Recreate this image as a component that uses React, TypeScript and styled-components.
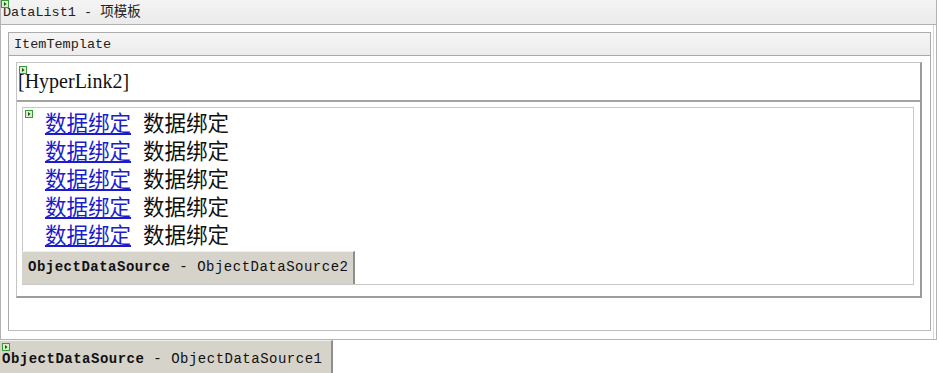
import styled, { createGlobalStyle } from "styled-components";

const GlobalStyle = createGlobalStyle`
  html, body {
    margin: 0;
    padding: 0;
    background: #ffffff;
  }
  body {
    width: 939px;
    height: 373px;
    overflow: hidden;
    font-family: "Liberation Mono", "Noto Sans CJK SC", monospace;
  }
`;

const rows = [0, 1, 2, 3, 4];

function Glyph() {
  return (
    <svg width="8" height="8" viewBox="0 0 8 8">
      <rect x="0.5" y="0.5" width="7" height="7" fill="#d8f0c8" stroke="#3a9a3a" />
      <path d="M3 2 L5.5 4 L3 6 Z" fill="#1d4d1d" />
    </svg>
  );
}

function App() {
  return (
    <Page>
      <GlobalStyle />
      <Frame>
        <TitleBar>
          <Marker $x={0} $y={0}>
            <Glyph />
          </Marker>
          DataList1 - 项模板
        </TitleBar>
        <FrameBody>
          <TemplateBox>
            <TemplateHeader>ItemTemplate</TemplateHeader>
            <TemplateBody>
              <ItemArea>
                <LinkRow>
                  <Marker $x={2} $y={3}>
                    <Glyph />
                  </Marker>
                  [HyperLink2]
                </LinkRow>
                <ListWrap>
                  <ListBox>
                    <Marker $x={2} $y={2}>
                      <Glyph />
                    </Marker>
                    {rows.map((i) => (
                      <Row key={i}>
                        <BoundLink href="#">数据绑定</BoundLink>
                        <span>数据绑定</span>
                      </Row>
                    ))}
                    <SourceTag $inner>
                      <b>ObjectDataSource</b> - ObjectDataSource2
                    </SourceTag>
                  </ListBox>
                </ListWrap>
              </ItemArea>
            </TemplateBody>
          </TemplateBox>
        </FrameBody>
      </Frame>
      <SourceTag>
        <Marker $x={2} $y={2}>
          <Glyph />
        </Marker>
        <b>ObjectDataSource</b> - ObjectDataSource1
      </SourceTag>
    </Page>
  );
}

export default App;

const Page = styled.div`
  display: flex;
  flex-direction: column;
  align-items: flex-start;
`;

const Frame = styled.div`
  width: 935px;
  border: 1px solid #b4b4b4;
  border-top: none;
  box-shadow: inset -2px 0 0 #ffffff, inset -3px 0 0 #d6d6d6;
`;

const Marker = styled.span<{ $x: number; $y: number }>`
  position: absolute;
  left: ${(p) => p.$x}px;
  top: ${(p) => p.$y}px;
  width: 8px;
  height: 8px;
  line-height: 0;
`;

const TitleBar = styled.div`
  position: relative;
  height: 24px;
  line-height: 25px;
  padding-left: 2px;
  font-size: 13.5px;
  color: #222;
  background: linear-gradient(#f4f4f4, #ebebeb);
  border-bottom: 1px solid #b0b0b0;
`;

const FrameBody = styled.div`
  padding: 7px 5px 8px 7px;
`;

const TemplateBox = styled.div`
  border: 1px solid #ababab;
  border-bottom-color: #bdbdbd;
  background: #ffffff;
`;

const TemplateHeader = styled.div`
  height: 22px;
  line-height: 23px;
  padding-left: 5px;
  font-size: 13.5px;
  color: #222;
  background: linear-gradient(#f5f5f5, #ececec);
  border-bottom: 1px solid #a8a8a8;
`;

const TemplateBody = styled.div`
  padding: 6px 8px 32px 7px;
`;

const ItemArea = styled.div`
  border: 1px solid #c4c4c4;
  border-right: 2px solid #9c9c9c;
  border-bottom: 2px solid #9c9c9c;
`;

const LinkRow = styled.div`
  position: relative;
  height: 37px;
  line-height: 37px;
  padding-left: 1px;
  font-family: "Liberation Serif", "Noto Sans CJK SC", serif;
  font-size: 20px;
  color: #111;
  border-bottom: 2px solid #a4a4a4;
`;

const ListWrap = styled.div`
  padding: 5px 6px 11px 5px;
`;

const ListBox = styled.div`
  position: relative;
  display: flex;
  flex-direction: column;
  align-items: flex-start;
  border: 1px solid #c8c8c8;
`;

const Row = styled.div`
  display: flex;
  gap: 12px;
  height: 28px;
  line-height: 28px;
  padding-left: 22px;
  font-family: "Noto Sans CJK SC", sans-serif;
  font-size: 21.5px;
  color: #111;
`;

const BoundLink = styled.a`
  color: #1c1ccc;
  text-decoration: underline;
  text-underline-offset: 2px;
`;

const SourceTag = styled.div<{ $inner?: boolean }>`
  position: relative;
  box-sizing: border-box;
  width: 333px;
  height: ${(p) => (p.$inner ? 33 : 34)}px;
  margin: ${(p) => (p.$inner ? "3px 0 0 -1px" : "0")};
  padding-left: ${(p) => (p.$inner ? 6 : 2)}px;
  line-height: ${(p) => (p.$inner ? 31 : 36)}px;
  font-family: "Liberation Mono", monospace;
  font-size: 14px;
  letter-spacing: 0.5px;
  color: #111;
  white-space: nowrap;
  background: #d6d3cb;
  border-top: 1px solid #eeeeee;
  border-right: 2px solid #8e8e8e;

  b {
    font-weight: 700;
  }
`;
